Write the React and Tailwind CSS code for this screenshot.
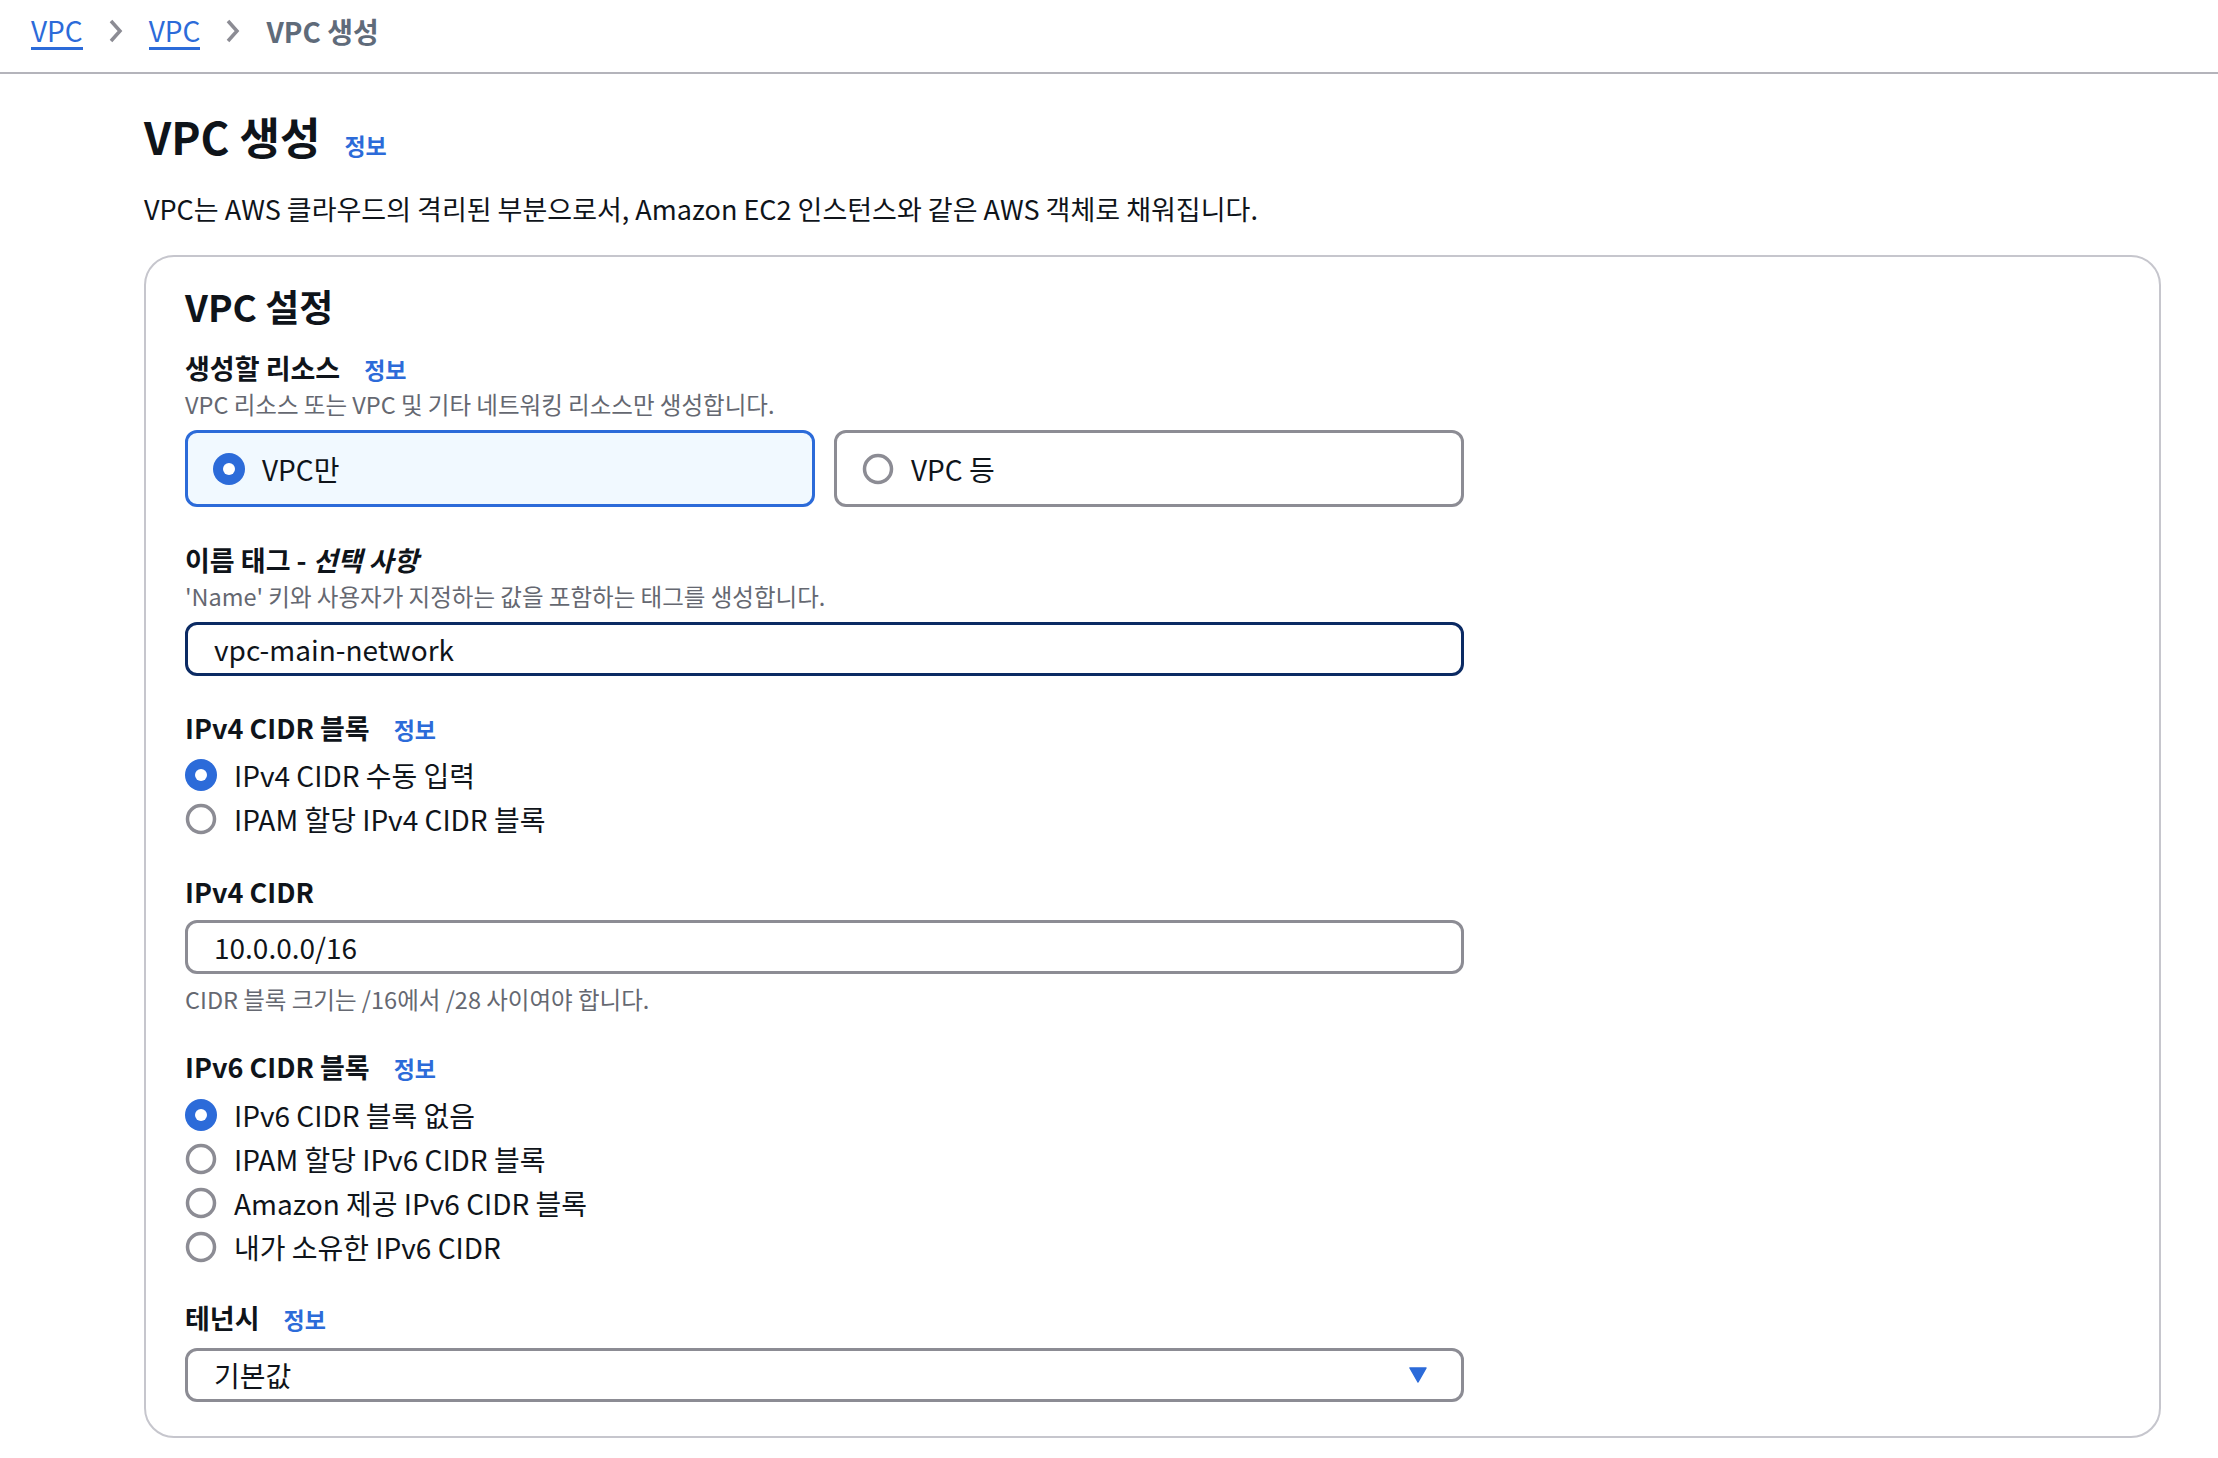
import React, { useState } from "react";

const font = { fontFamily: '"Noto Sans CJK KR", "Noto Sans", sans-serif' };

const Radio = ({ checked }) =>
  checked ? (
    <svg width="32" height="32" viewBox="0 0 32 32" className="shrink-0">
      <circle cx="16" cy="16" r="16" fill="#2c6bd9" />
      <circle cx="16" cy="16" r="6" fill="#ffffff" />
    </svg>
  ) : (
    <svg width="32" height="32" viewBox="0 0 32 32" className="shrink-0">
      <circle cx="16" cy="16" r="13.5" fill="#ffffff" stroke="#8c8c94" strokeWidth="3.5" />
    </svg>
  );

const Info = () => (
  <a className="text-[23px] font-bold text-[#2c6bd9] cursor-pointer">정보</a>
);

const Chevron = () => (
  <svg width="16" height="26" viewBox="0 0 16 26" className="shrink-0">
    <polyline points="3,3 12,13 3,23" fill="none" stroke="#8c8c94" strokeWidth="3.5" />
  </svg>
);

const Label = ({ children, info }) => (
  <div className="flex items-baseline gap-[24px] leading-[36px]">
    <span className="text-[27px] font-bold">{children}</span>
    {info && <Info />}
  </div>
);

const Desc = ({ children, className = "" }) => (
  <p className={"text-[23.5px] leading-[32px] text-[#656871] " + className}>{children}</p>
);

const RadioList = ({ items, value, onChange }) => (
  <div className="flex flex-col">
    {items.map((it, i) => (
      <label
        key={it}
        onClick={() => onChange(i)}
        className="flex items-center gap-[17px] h-[44px] text-[28px] cursor-pointer"
      >
        <Radio checked={value === i} />
        <span>{it}</span>
      </label>
    ))}
  </div>
);

export default function App() {
  const [resource, setResource] = useState(0);
  const [v4, setV4] = useState(0);
  const [v6, setV6] = useState(0);
  const [name, setName] = useState("vpc-main-network");
  const [cidr, setCidr] = useState("10.0.0.0/16");

  return (
    <div className="min-h-screen bg-white text-[#0f141a]" style={font}>
      {/* 상단 경로 */}
      <nav className="h-[74px] border-b-2 border-[#b4b4bb] flex items-center gap-[25px] pl-[31px] text-[28px] pb-[10px]">
        <a className="text-[#2c6bd9] border-b-[3px] border-[#2c6bd9] leading-[34px] cursor-pointer">VPC</a>
        <Chevron />
        <a className="text-[#2c6bd9] border-b-[3px] border-[#2c6bd9] leading-[34px] cursor-pointer">VPC</a>
        <Chevron />
        <span className="font-bold text-[#5f6b7a] leading-[34px]">VPC 생성</span>
      </nav>

      <main className="pl-[144px] pr-[57px] pt-[36px] pb-[21px]">
        <div className="flex items-baseline gap-[24px]">
          <h1 className="text-[44px] font-bold leading-[53px]">VPC 생성</h1>
          <Info />
        </div>
        <p className="text-[27px] leading-[40px] mt-[26px]">
          VPC는 AWS 클라우드의 격리된 부분으로서, Amazon EC2 인스턴스와 같은 AWS 객체로 채워집니다.
        </p>

        <section className="mt-[26px] border-2 border-[#c6c6cd] rounded-[30px] pl-[39px] pr-[39px] pt-[27px] pb-[34px]">
          <h2 className="text-[37px] font-bold leading-[44px]">VPC 설정</h2>

          <div className="w-[1279px]">
            <div className="mt-[22px]">
              <Label info>생성할 리소스</Label>
              <Desc className="mt-[1px]">VPC 리소스 또는 VPC 및 기타 네트워킹 리소스만 생성합니다.</Desc>
              <div className="grid grid-cols-2 gap-[19px] mt-[10px]">
                {["VPC만", "VPC 등"].map((t, i) => (
                  <button
                    key={t}
                    onClick={() => setResource(i)}
                    className={
                      "h-[77px] rounded-[12px] border-[3px] flex items-center gap-[17px] pl-[25px] text-[28px] text-left " +
                      (resource === i ? "border-[#2c6bd9] bg-[#f1f9ff]" : "border-[#8c8c94] bg-white")
                    }
                  >
                    <Radio checked={resource === i} />
                    <span>{t}</span>
                  </button>
                ))}
              </div>
            </div>

            <div className="mt-[35px]">
              <Label>
                이름 태그 - <i className="italic">선택 사항</i>
              </Label>
              <Desc className="mt-[2px]">'Name' 키와 사용자가 지정하는 값을 포함하는 태그를 생성합니다.</Desc>
              <input
                value={name}
                onChange={(e) => setName(e.target.value)}
                className="mt-[10px] w-full h-[54px] rounded-[12px] border-[3px] border-[#0b2a63] pl-[26px] text-[28px] outline-none"
                style={font}
              />
            </div>

            <div className="mt-[34px]">
              <Label info>IPv4 CIDR 블록</Label>
              <div className="mt-[6px]">
                <RadioList items={["IPv4 CIDR 수동 입력", "IPAM 할당 IPv4 CIDR 블록"]} value={v4} onChange={setV4} />
              </div>
            </div>

            <div className="mt-[33px]">
              <Label>IPv4 CIDR</Label>
              <input
                value={cidr}
                onChange={(e) => setCidr(e.target.value)}
                className="mt-[10px] w-full h-[54px] rounded-[12px] border-[3px] border-[#8c8c94] pl-[26px] text-[28px] outline-none"
                style={font}
              />
              <Desc className="mt-[9px]">CIDR 블록 크기는 /16에서 /28 사이여야 합니다.</Desc>
            </div>

            <div className="mt-[34px]">
              <Label info>IPv6 CIDR 블록</Label>
              <div className="mt-[7px]">
                <RadioList
                  items={["IPv6 CIDR 블록 없음", "IPAM 할당 IPv6 CIDR 블록", "Amazon 제공 IPv6 CIDR 블록", "내가 소유한 IPv6 CIDR"]}
                  value={v6}
                  onChange={setV6}
                />
              </div>
            </div>

            <div className="mt-[31px]">
              <Label info>테넌시</Label>
              <div className="mt-[11px] w-full h-[54px] rounded-[12px] border-[3px] border-[#8c8c94] pl-[26px] pr-[34px] flex items-center justify-between text-[28px] cursor-pointer">
                <span>기본값</span>
                <svg width="18" height="16" viewBox="0 0 18 16">
                  <polygon points="1,1 17,1 9,15" fill="#2c6bd9" stroke="#2c6bd9" strokeWidth="1.5" strokeLinejoin="round" />
                </svg>
              </div>
            </div>
          </div>
        </section>
      </main>
    </div>
  );
}
